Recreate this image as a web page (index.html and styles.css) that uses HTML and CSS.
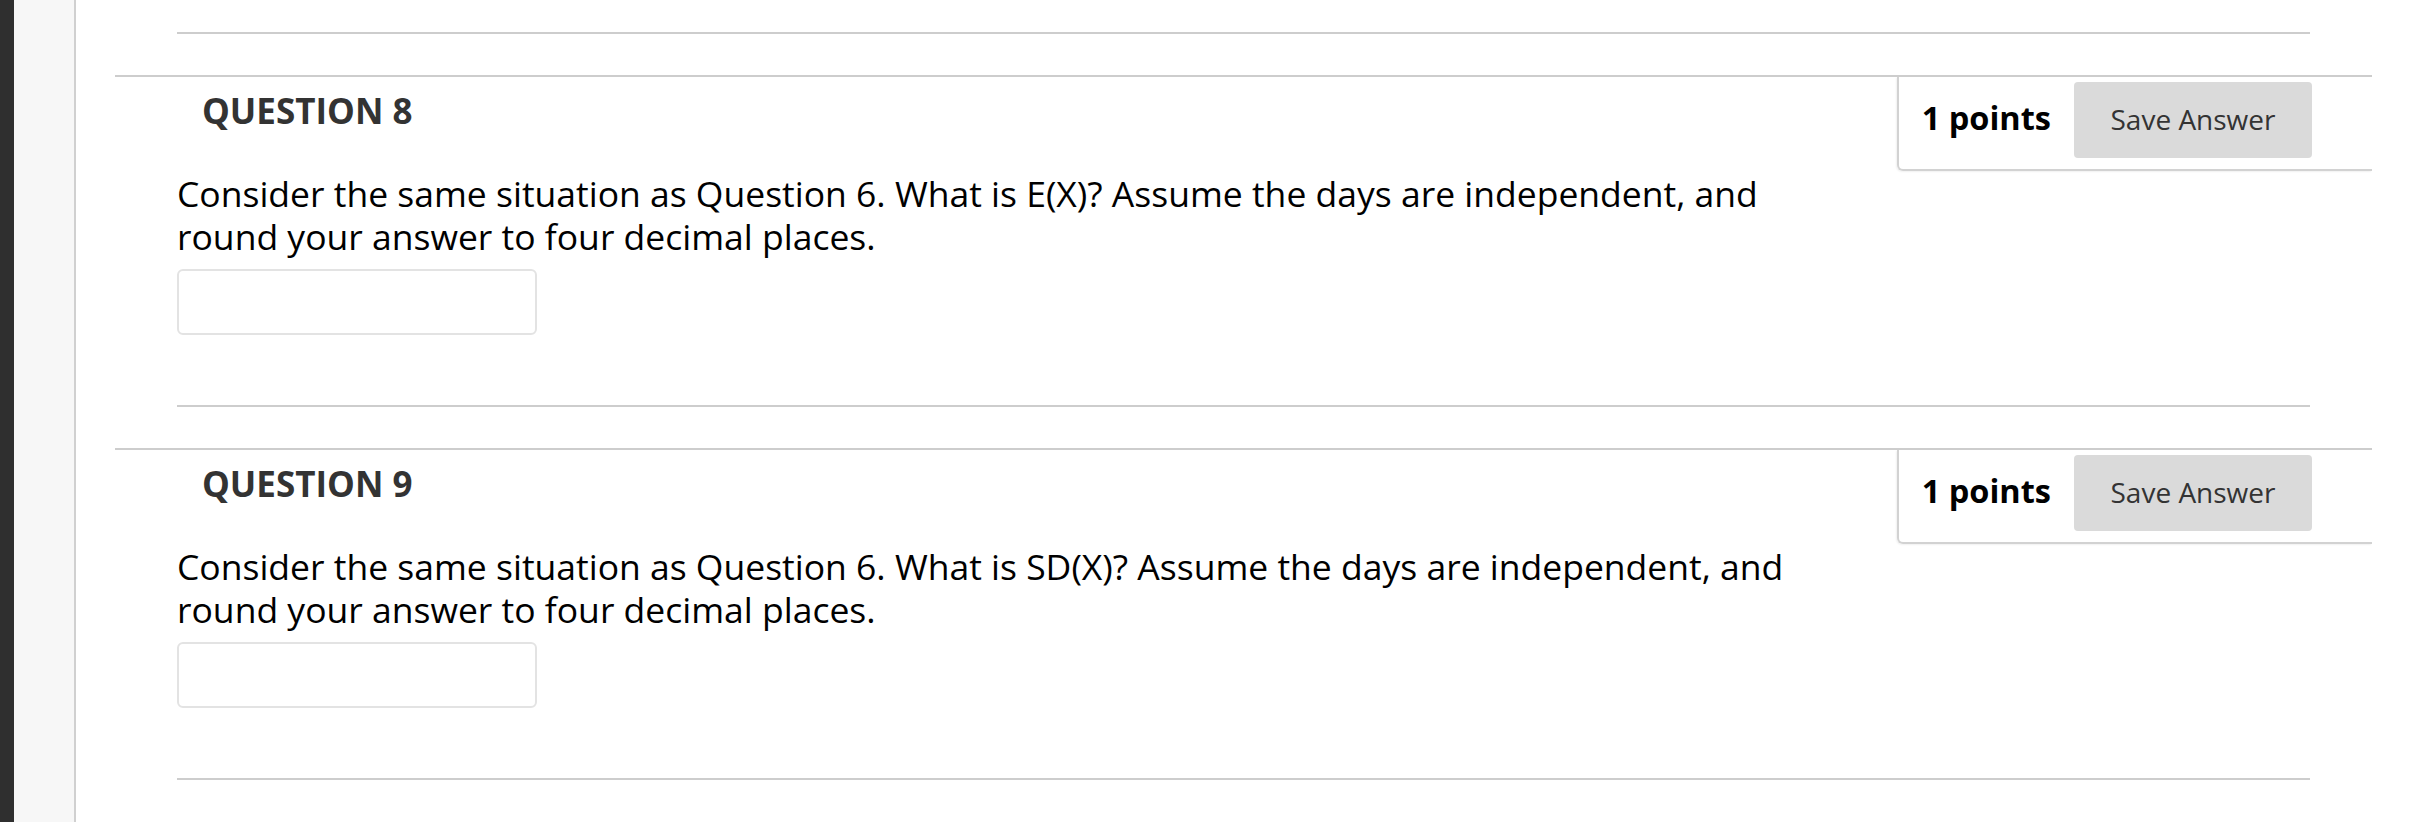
FILE: index.html
```html
<!DOCTYPE html>
<html lang="en">
<head>
<meta charset="utf-8">
<title>Questions</title>
<link rel="stylesheet" href="styles.css">
</head>
<body>
<div class="page">
  <aside class="rail"><div class="rail-dark"></div><div class="rail-light"></div></aside>
  <main class="content">
    <hr class="sep top-sep">
    <section class="question">
      <div class="q-head">
        <h3 class="q-title">QUESTION 8</h3>
        <div class="points-box">
          <span class="points">1 points</span>
          <button class="save" type="button">Save Answer</button>
        </div>
      </div>
      <div class="q-body">
        <p class="q-text">Consider the same situation as Question 6. What is E(X)? Assume the days are independent, and round your answer to four decimal places.</p>
        <input class="answer" type="text">
      </div>
      <hr class="sep">
    </section>
    <section class="question">
      <div class="q-head">
        <h3 class="q-title">QUESTION 9</h3>
        <div class="points-box">
          <span class="points">1 points</span>
          <button class="save" type="button">Save Answer</button>
        </div>
      </div>
      <div class="q-body">
        <p class="q-text">Consider the same situation as Question 6. What is SD(X)? Assume the days are independent, and round your answer to four decimal places.</p>
        <input class="answer" type="text">
      </div>
      <hr class="sep">
    </section>
  </main>
</div>
</body>
</html>
```
FILE: styles.css
```css
html, body {
  margin: 0;
  padding: 0;
  background: #ffffff;
  font-family: "Open Sans", "Noto Sans", sans-serif;
}
.page {
  display: flex;
  min-height: 822px;
  overflow: hidden;
}
.rail {
  display: flex;
  flex: 0 0 auto;
}
.rail-dark {
  width: 14px;
  background: #2f2f2f;
}
.rail-light {
  width: 60px;
  background: #f7f7f7;
  border-right: 2px solid #d0d0d0;
}
.content {
  flex: 1 1 auto;
  padding: 0 40px 0 39px;
}
.sep {
  border: 0;
  height: 2px;
  background: #cdcdcd;
  margin: 0 62px;
}
.top-sep {
  margin-top: 32px;
  margin-bottom: 41px;
}
.question {
  border-top: 2px solid #cdcdcd;
  padding: 0 62px 41px;
}
.q-head {
  display: flex;
  justify-content: space-between;
  align-items: flex-start;
  margin-bottom: 1px;
}
.q-title {
  margin: 11px 0 0 25px;
  font-size: 35px;
  font-weight: 700;
  color: #333333;
  line-height: 46px;
}
.points-box {
  display: flex;
  align-items: center;
  margin-right: -62px;
  padding: 5px 60px 11px 23px;
  border-left: 2px solid #d2d2d2;
  border-bottom: 2px solid #d2d2d2;
  border-bottom-left-radius: 6px;
  box-shadow: -1px 1px 2px rgba(0, 0, 0, 0.06);
}
.points {
  font-size: 32.5px;
  font-weight: 700;
  color: #000000;
  margin: 0 23px 5px 0;
}
.save {
  width: 238px;
  height: 76px;
  border: 0;
  border-radius: 4px;
  background: #dadada;
  color: #333333;
  font-family: "Open Sans", "Noto Sans", sans-serif;
  font-size: 28px;
  padding: 0 0 2px;
}
.q-body {
  padding-bottom: 70px;
}
.q-text {
  margin: 0 0 11px;
  font-size: 35.5px;
  line-height: 43px;
  color: #000000;
  max-width: 1660px;
}
.answer {
  display: block;
  box-sizing: border-box;
  width: 360px;
  height: 66px;
  margin: 0;
  border: 2px solid #e3e3e3;
  border-radius: 6px;
  background: #ffffff;
}
.question .sep {
  margin: 0;
}
```
